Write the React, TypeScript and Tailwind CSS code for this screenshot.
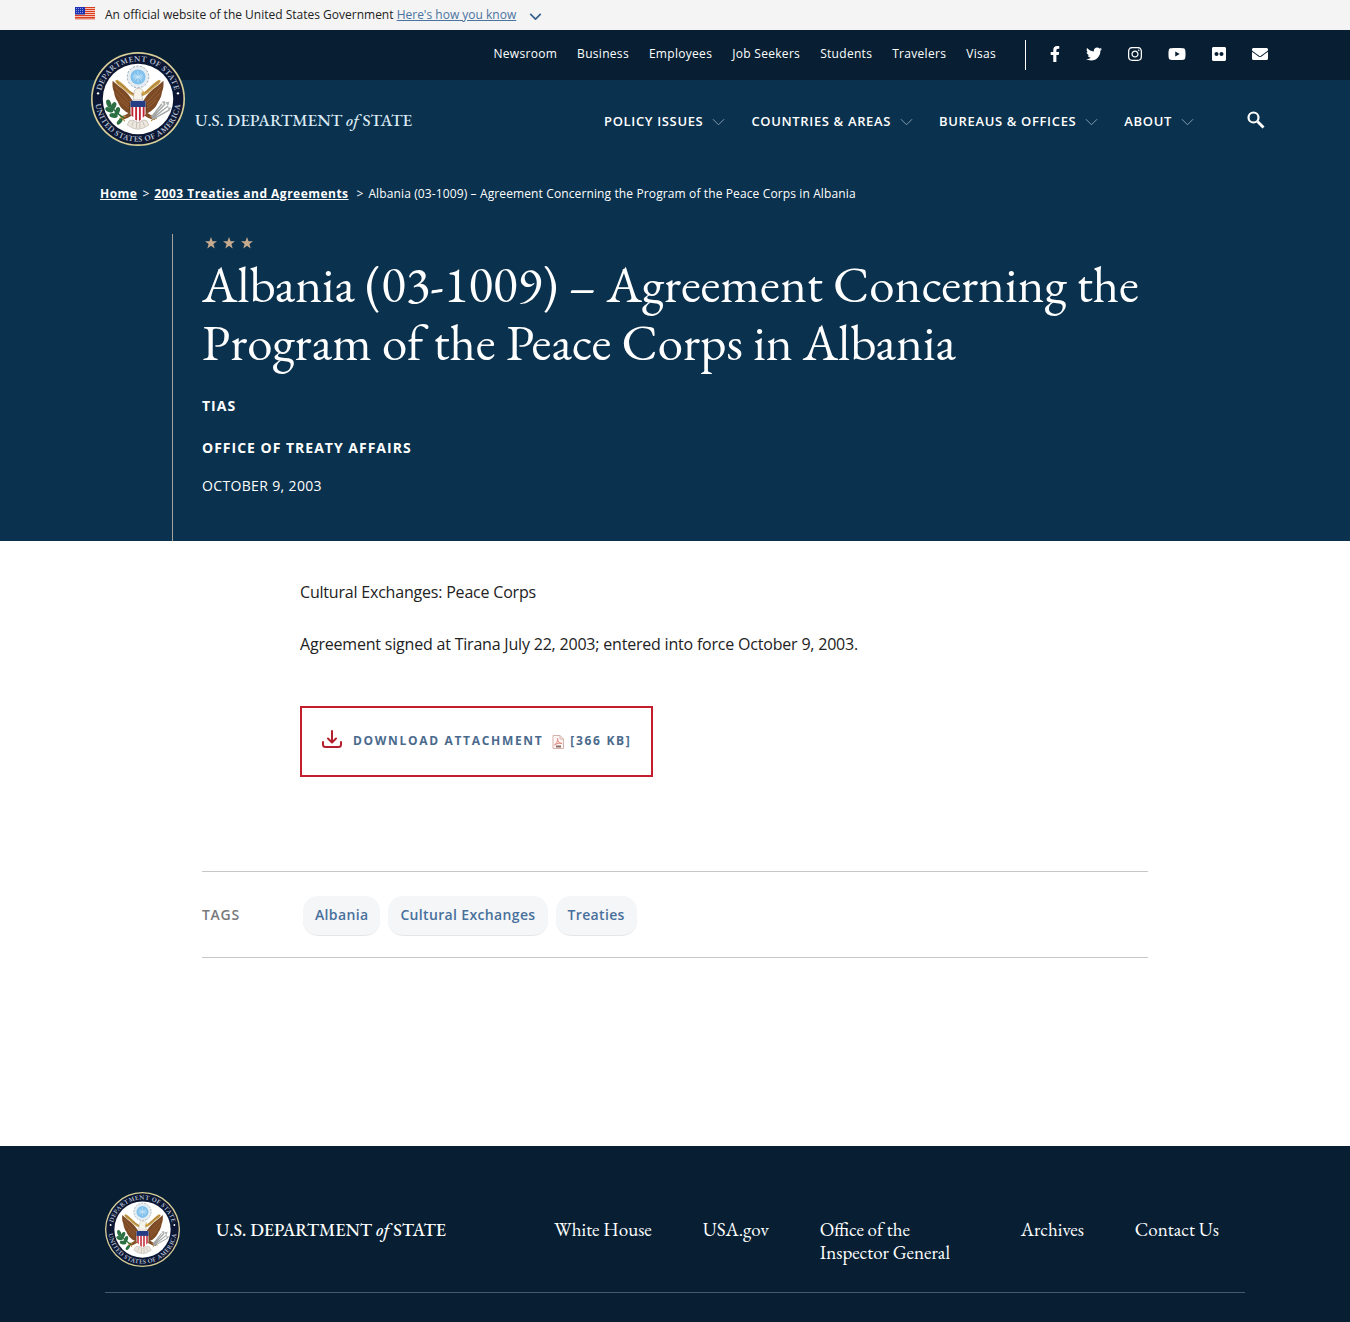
import React from "react";
import { FaEnvelope, FaFacebookF, FaFlickr, FaInstagram, FaTwitter, FaYoutube } from "react-icons/fa";

const serif = "font-['EB_Garamond','Liberation_Serif',serif]";

const utilityLinks = ["Newsroom", "Business", "Employees", "Job Seekers", "Students", "Travelers", "Visas"];

const socialLinks = [
  { label: "Facebook", icon: <FaFacebookF className="h-4 w-[10px]" /> },
  { label: "Twitter", icon: <FaTwitter className="h-4 w-4" /> },
  { label: "Instagram", icon: <FaInstagram className="h-4 w-[14px]" /> },
  { label: "YouTube", icon: <FaYoutube className="h-4 w-[18px]" /> },
  { label: "Flickr", icon: <FaFlickr className="h-4 w-[14px]" /> },
  { label: "Email", icon: <FaEnvelope className="h-4 w-4" /> },
];

const navItems = ["Policy Issues", "Countries & Areas", "Bureaus & Offices", "About"];

const tags = ["Albania", "Cultural Exchanges", "Treaties"];

function Flag() {
  return (
    <svg viewBox="0 0 20 13" className="h-[13px] w-5 shrink-0" aria-hidden="true">
      <rect width="20" height="12" fill="#fff" />
      {[0, 2, 4, 6, 8, 10].map((y) => (
        <rect key={y} y={y} width="20" height="1.3" fill="#db3e1f" />
      ))}
      <rect y="11.500" width="20" height=".8" fill="#db3e1f" />
      <rect width="10" height="7.5" fill="#1e33b1" />
      {[1, 3, 5].map((y) =>
        [1, 3, 5, 7].map((x) => <rect key={`${x}-${y}`} x={x} y={y} width="1" height="1" fill="#8b9ae0" />)
      )}
    </svg>
  );
}

function Seal({ id, className }: { id: string; className: string }) {
  return (
    <svg viewBox="0 0 200 200" className={className} role="img" aria-label="Department of State seal">
      <circle cx="100" cy="100" r="100" fill="#d9cf98" />
      <circle cx="100" cy="100" r="96.500" fill="#0c1733" />
      <circle cx="100" cy="100" r="75" fill="#fff" />
      <path id={`${id}-top`} d="M20 100a80 80 0 0 1 160 0" fill="none" />
      <path id={`${id}-bottom`} d="M9 100a91 91 0 0 0 182 0" fill="none" />
      <g fill="#b9c2d6" fontFamily="EB Garamond, Liberation Serif, serif" fontSize="17" fontWeight="600" textAnchor="middle">
        <text letterSpacing="1">
          <textPath href={`#${id}-top`} startOffset="50%">DEPARTMENT OF STATE</textPath>
        </text>
        <text letterSpacing="1">
          <textPath href={`#${id}-bottom`} startOffset="50%">UNITED STATES OF AMERICA</textPath>
        </text>
      </g>
      <circle cx="15" cy="88" r="2.500" fill="#fff" />
      <circle cx="185" cy="88" r="2.500" fill="#fff" />

      {/* glory */}
      <circle cx="100" cy="53" r="23" fill="#e6edf2" stroke="#9aa8b3" strokeWidth="2" strokeDasharray="5 3" />
      <circle cx="100" cy="53" r="16" fill="#7fc0ec" />
      <path
        d="M100 41v24M88 53h24M92 45l16 16M108 45L92 61M90 49l20 8M90 57l20-8"
        stroke="#cfe8f8"
        strokeWidth="1.500"
      />

      {/* scroll */}
      <path d="M96 90C82 86 76 72 56 59l-5 2 5 8c14 8 22 22 40 27z" fill="#c9a04e" />
      <path d="M104 90c14-4 20-18 40-31l5 2-5 8c-14 8-22 22-40 27z" fill="#c9a04e" />
      <path d="M54 62c16 9 23 22 38 28M146 62c-16 9-23 22-38 28" fill="none" stroke="#8a6322" strokeWidth="1.500" />

      {/* wings and body */}
      <path
        d="M90 106c-5-8-10-16-20-25-8-7-16-12-24-20-1 10 0 17 3 24 1 9 4 15 8 21 3 8 7 13 12 17 7 7 14 9 23 8z"
        fill="#7d4a26"
      />
      <path
        d="M110 106c5-8 10-16 20-25 8-7 16-12 24-20 1 10 0 17-3 24-1 9-4 15-8 21-3 8-7 13-12 17-7 7-14 9-23 8z"
        fill="#7d4a26"
      />
      <path
        d="M51 74c8 9 18 19 31 34M54 88c7 9 16 17 28 26M61 102c6 7 13 12 21 18M149 74c-8 9-18 19-31 34M146 88c-7 9-16 17-28 26M139 102c-6 7-13 12-21 18"
        fill="none"
        stroke="#a0683a"
        strokeWidth="1.500"
      />
      <path d="M82 108c-4 14 0 28 18 36 18-8 22-22 18-36z" fill="#6d3f1e" />
      <path d="M92 84c2-8 14-9 18-2l4 6-7-1c1 6 3 10 3 15H90c0-7 1-12 2-18z" fill="#f6f3ea" stroke="#a3978a" />
      <path d="M109 83l8 4-8 2z" fill="#dfa52f" />

      {/* shield */}
      <path d="M84 104h32v28c0 8-8 12-16 16-8-4-16-8-16-16z" fill="#fff" />
      <path d="M86 114h4v25l-4-4zM94 114h4v32l-4-2zM102 114h4v30l-4 3zM110 114h4v22l-4 4z" fill="#bf2435" />
      <path d="M84 104h32v13H84z" fill="#243d83" />

      {/* legs and tail */}
      <path d="M84 132c-8 5-14 9-20 8M116 132c8 5 14 9 20 8" fill="none" stroke="#84502a" strokeWidth="8" />
      <path d="M60 142l14-6M140 142l-14-6M62 136l10 11M138 136l-10 11" stroke="#c08f35" strokeWidth="2.500" />
      <path
        d="M82 146c8-3 12 2 18 4 6-2 10-7 18-4l5 9c-7 4-10 8-23 9-13-1-16-5-23-9z"
        fill="#ece8e0"
        stroke="#b9b0a5"
        strokeWidth="1.500"
      />
      <path d="M90 148l-3 10M97 149v13M104 149v13M110 148l4 10" stroke="#b9b0a5" strokeWidth="1.500" />

      {/* olive branch */}
      <path d="M36 108c8 10 16 22 34 32" fill="none" stroke="#2f6b3d" strokeWidth="3" />
      <g fill="#2c6f42">
        <ellipse cx="38" cy="110" rx="5" ry="9" transform="rotate(-20 38 110)" />
        <ellipse cx="48" cy="115" rx="5" ry="9" transform="rotate(25 48 115)" />
        <ellipse cx="39" cy="123" rx="5" ry="9" transform="rotate(-70 39 123)" />
        <ellipse cx="56" cy="126" rx="5" ry="9" transform="rotate(20 56 126)" />
        <ellipse cx="48" cy="135" rx="5" ry="9" transform="rotate(-80 48 135)" />
        <ellipse cx="61" cy="148" rx="4" ry="8" transform="rotate(40 61 148)" />
      </g>

      {/* arrows */}
      <path d="M130 140l28-30M130 142l34-27M132 143l35-20M128 139l23-29" stroke="#a3a6a6" strokeWidth="3" />
      <path d="M150 106l8-2-1 9M158 107l9-1-3 9M163 118l8 0-5 8" fill="#b0b3b3" />
    </svg>
  );
}

function Wordmark({ className }: { className: string }) {
  return (
    <span className={`${serif} font-medium ${className}`}>
      U.S. DEPARTMENT <i>of</i> STATE
    </span>
  );
}

function Chevron({ className }: { className: string }) {
  return (
    <svg viewBox="0 0 14 8" className={className} fill="none" stroke="currentColor" aria-hidden="true">
      <path d="M1 1l6 6 6-6" />
    </svg>
  );
}

function Star() {
  return (
    <svg viewBox="0 0 12 12" className="h-3 w-3" fill="#c9ab8e" aria-hidden="true">
      <path d="M6 0l1.500 4.200H12L8.400 6.900 9.700 11.500 6 8.700 2.300 11.500l1.300-4.600L0 4.200h4.500z" />
    </svg>
  );
}

function SearchIcon() {
  return (
    <svg viewBox="0 0 18 18" className="h-[18px] w-[18px]" fill="none" stroke="currentColor" aria-hidden="true">
      <circle cx="6.500" cy="6.500" r="5" strokeWidth="2.200" />
      <path d="M10.500 10.500l6 6" strokeWidth="2.800" />
    </svg>
  );
}

function DownloadIcon() {
  return (
    <svg
      viewBox="0 0 20 18"
      className="mb-1 h-[18px] w-5"
      fill="none"
      stroke="#b5202e"
      strokeWidth="2"
      strokeLinecap="round"
      strokeLinejoin="round"
      aria-hidden="true"
    >
      <path d="M10 1v11M6 8.500l4 4 4-4M1 12v2.500c0 1.400.6 2.500 2.500 2.500h13c1.900 0 2.500-1.100 2.500-2.500V12" />
    </svg>
  );
}

function PdfIcon() {
  return (
    <svg viewBox="0 0 12 14" className="h-[14px] w-3" aria-hidden="true">
      <path d="M1 .5h7l3.500 3.500v9.500H1z" fill="#fdf6f4" stroke="#d5b3ab" />
      <path d="M8 .5V4h3.500" fill="none" stroke="#d5b3ab" />
      <path d="M2.500 10c2-1 3.500-4 3-6.500C5.500 6 7 8.500 10 8.500 7 7.800 4.500 8.500 2.500 10z" fill="none" stroke="#e08a7e" />
      <rect x="4" y="10.500" width="5" height="2" fill="#8b6a66" />
    </svg>
  );
}

export default function App() {
  return (
    <div className="bg-white font-['Open_Sans',sans-serif] text-[#222]">
      <div className="h-[30px] bg-[#f4f4f4]">
        <div className="mx-auto flex h-full max-w-[1200px] items-center text-xs">
          <span className="mb-1 flex">
            <Flag />
          </span>
          <p className="ml-[10px]">
            An official website of the United States Government{" "}
            <button type="button" className="text-[#4a73a0] underline">
              Here's how you know
            </button>
          </p>
          <Chevron className="ml-[13px] mt-0.5 h-[7px] w-[13px] stroke-2 text-[#39628f]" />
        </div>
      </div>

      <div className="bg-[#0a314d] text-white">
        <header>
          <div className="bg-[#081f33]">
            <div className="mx-auto flex h-[50px] max-w-[1200px] items-center justify-end pr-[7px]">
              <nav aria-label="Utility" className="mb-0.5 flex gap-5 text-xs tracking-wide">
                {utilityLinks.map((link) => (
                  <a key={link} href="#">
                    {link}
                  </a>
                ))}
              </nav>
              <div className="ml-[29px] flex h-[30px] items-center gap-[26px] border-l border-white pl-6">
                {socialLinks.map(({ label, icon }) => (
                  <a key={label} href="#" aria-label={label} className="mb-0.5">
                    {icon}
                  </a>
                ))}
              </div>
            </div>
          </div>

          <div className="mx-auto flex h-20 max-w-[1200px] justify-between pl-4 pr-[10px]">
            <a href="#" className="-mt-7 flex h-[94px] items-end">
              <Seal id="header-seal" className="h-[94px] w-[94px]" />
              <Wordmark className="mb-[14px] ml-[10px] text-[17px] leading-6 text-[#dcebf5]" />
            </a>
            <div className="flex items-center">
              <nav aria-label="Main" className="mt-1 flex gap-[26px] text-[13px]">
                {navItems.map((item) => (
                  <button key={item} type="button" className="flex items-center gap-[9px] font-semibold uppercase tracking-wider">
                    {item}
                    <Chevron className="h-2 w-[13px] text-[#8aa3b8]" />
                  </button>
                ))}
              </nav>
              <button type="button" aria-label="Search" className="ml-[53px]">
                <SearchIcon />
              </button>
            </div>
          </div>
        </header>

        <nav aria-label="Breadcrumb" className="mx-auto max-w-[1150px] pt-[25px] text-xs leading-[18px]">
          <ol className="flex gap-[5px]">
            <li>
              <a href="#" className="font-bold tracking-[0.04em] underline">Home</a>
            </li>
            <li className="flex gap-[5px]">
              <span>&gt;</span>
              <a href="#" className="font-bold tracking-[0.04em] underline">2003 Treaties and Agreements</a>
            </li>
            <li className="ml-[3px] flex gap-[5px]">
              <span>&gt;</span>
              <span className="tracking-[0.01em]">
                Albania (03-1009) – Agreement Concerning the Program of the Peace Corps in Albania
              </span>
            </li>
          </ol>
        </nav>

        <div className="mx-auto mt-[31px] max-w-[1006px] border-l border-[#a7a29c] pb-[45px] pl-[29px]">
          <div className="flex gap-[6px] pl-[3px] pt-[3px]">
            <Star />
            <Star />
            <Star />
          </div>
          <h1 className={`${serif} mt-1.5 text-[51px] leading-[58px]`}>
            Albania (03-1009) – Agreement Concerning the Program of the Peace Corps in Albania
          </h1>
          <p className="mt-[25px] text-sm font-bold leading-5 tracking-[1px]">TIAS</p>
          <p className="mt-[22px] text-sm font-bold leading-5 tracking-[1px]">OFFICE OF TREATY AFFAIRS</p>
          <p className="mt-[18px] text-sm leading-5 tracking-wide">OCTOBER 9, 2003</p>
        </div>
      </div>

      <main>
        <div className="mx-auto max-w-[750px] pt-[39px] text-base leading-6 tracking-[-0.0125em]">
          <p>Cultural Exchanges: Peace Corps</p>
          <p className="mt-7">Agreement signed at Tirana July 22, 2003; entered into force October 9, 2003.</p>
          <a
            href="#"
            className="mt-[50px] inline-flex h-[71px] items-center border-2 border-[#c41e2e] px-5 pb-0.5 text-xs font-bold uppercase tracking-[0.14em] text-[#4a6a8d]"
          >
            <DownloadIcon />
            <span className="ml-[11px]">Download Attachment</span>
            <span className="ml-[9px] mt-0.5">
              <PdfIcon />
            </span>
            <span className="ml-[6px]">[366 KB]</span>
          </a>
        </div>

        <section className="mx-auto mb-[188px] mt-[94px] flex h-[87px] max-w-[946px] items-center border-y border-[#c4c8ca]">
          <h2 className="w-[101px] text-sm font-semibold tracking-[0.05em] text-[#77797b]">TAGS</h2>
          <ul className="mt-0.5 flex gap-2">
            {tags.map((tag) => (
              <li key={tag}>
                <a
                  href="#"
                  className="flex h-10 items-center rounded-[15px] border-b border-[#e6e6e6] bg-[#f5f6f7] px-3 text-sm font-semibold tracking-wide text-[#48709c]"
                >
                  {tag}
                </a>
              </li>
            ))}
          </ul>
        </section>
      </main>

      <footer className="bg-[#081f33] pb-[29px] pt-[46px] text-white">
        <div className="mx-auto flex h-[101px] max-w-[1140px] items-start border-b border-[#47596a]">
          <a href="#" className="flex items-center">
            <Seal id="footer-seal" className="h-[75px] w-[75px]" />
            <Wordmark className="ml-9 text-[18px] leading-6" />
          </a>
          <nav aria-label="Footer" className={`${serif} ml-auto mr-[26px] mt-[26px] flex gap-[51px] text-[19px] leading-[23px]`}>
            <a href="#">White House</a>
            <a href="#">USA.gov</a>
            <a href="#" className="w-[150px]">Office of the Inspector General</a>
            <a href="#">Archives</a>
            <a href="#">Contact Us</a>
          </nav>
        </div>
      </footer>
    </div>
  );
}
